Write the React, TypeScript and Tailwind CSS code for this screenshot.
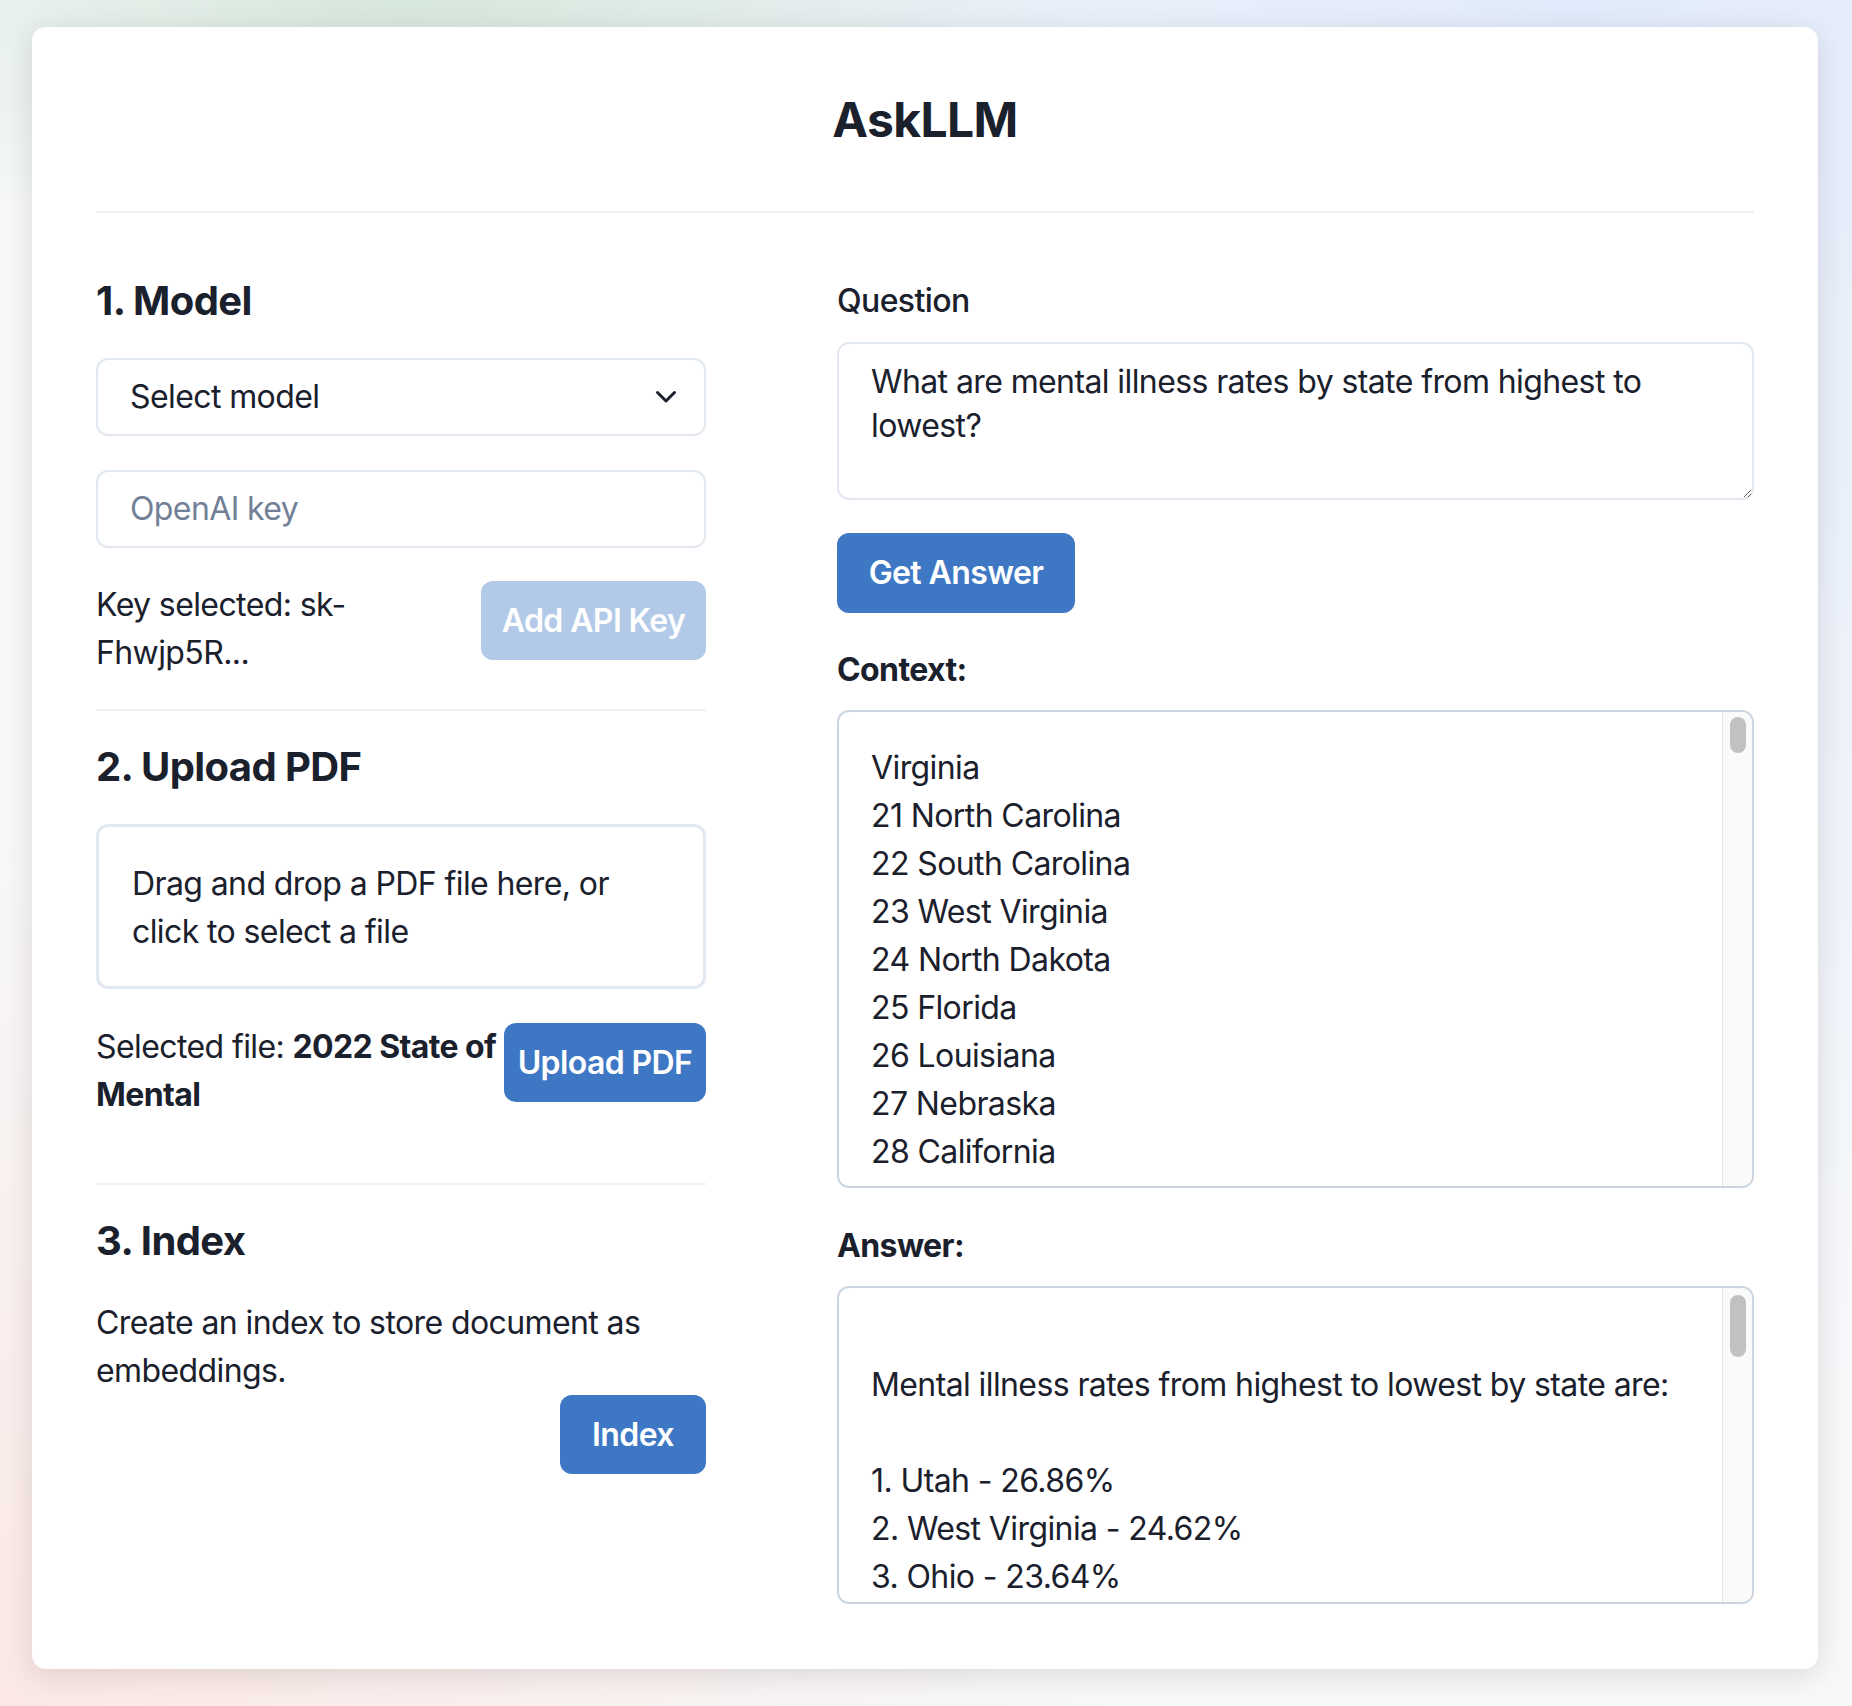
import React from "react";

const contextLines = [
  "Virginia",
  "21 North Carolina",
  "22 South Carolina",
  "23 West Virginia",
  "24 North Dakota",
  "25 Florida",
  "26 Louisiana",
  "27 Nebraska",
  "28 California",
];

const answerLines = [
  "Mental illness rates from highest to lowest by state are:",
  "",
  "1. Utah - 26.86%",
  "2. West Virginia - 24.62%",
  "3. Ohio - 23.64%",
];

function Scrollbar({ top, height }: { top: string; height: string }) {
  return (
    <div className={`w-[30px] shrink-0 border-l border-[#e6e6e6] bg-[#fafafa] flex justify-center ${top}`}>
      <div className={`w-[16px] ${height} rounded-full bg-[#c1c1c1]`} />
    </div>
  );
}

export default function App() {
  return (
    <div className="min-h-screen w-full pt-[27px] pb-[37px] pl-[32px] pr-[34px] bg-[#f7f8fa] [background-image:radial-gradient(700px_260px_at_22%_0%,#d6e7dc,transparent),radial-gradient(1100px_900px_at_0%_100%,#fbe8e4,transparent),radial-gradient(1400px_1400px_at_85%_0%,#e2ebfb,transparent)] font-[Inter,'Noto_Sans',sans-serif] text-[#1a202c] tracking-[-0.6px]">
      <div className="rounded-[14px] bg-white shadow-[0_6px_28px_rgba(60,40,40,0.14)] px-[64px] pt-[64px] pb-[65px]">
        <h1 className="text-center text-[48px] leading-[58px] font-bold tracking-[-0.6px]">AskLLM</h1>
        <div className="mt-[62px] h-[2px] bg-[#edf1f5]" />

        <div className="mt-[64px] grid grid-cols-[610px_1fr] gap-x-[131px]">
          {/* Left column */}
          <div className="flex flex-col">
            <h2 className="text-[40px] leading-[48px] font-bold tracking-[-0.6px]">1. Model</h2>
            <div className="mt-[33px] h-[78px] rounded-[12px] border-2 border-[#e2e8f0] pl-[32px] pr-[27px] flex items-center justify-between text-[32px]">
              <span>Select model</span>
              <svg width="22" height="14" viewBox="0 0 22 14" fill="none">
                <polyline points="2.5,2.5 11,11 19.5,2.5" stroke="#1a202c" strokeWidth="3" strokeLinecap="round" strokeLinejoin="round" />
              </svg>
            </div>
            <div className="mt-[34px] h-[78px] rounded-[12px] border-2 border-[#e2e8f0] pl-[32px] flex items-center text-[32px] text-[#718096]">
              OpenAI key
            </div>
            <div className="mt-[33px] flex items-start justify-between gap-[16px]">
              <p className="text-[32px] leading-[48px]">
                Key selected: sk-
                <br />
                Fhwjp5R...
              </p>
              <button className="w-[225px] h-[79px] shrink-0 rounded-[12px] bg-[#b2c9e7] text-white font-semibold text-[32px]">
                Add API Key
              </button>
            </div>

            <div className="mt-[32px] h-[2px] bg-[#edf1f5]" />

            <h2 className="mt-[32px] text-[40px] leading-[48px] font-bold tracking-[-0.6px]">2. Upload PDF</h2>
            <div className="mt-[33px] rounded-[12px] border-[3px] border-[#e2e8f0] pl-[33px] pr-[20px] pt-[33px] pb-[30px] text-[32px] leading-[48px]">
              Drag and drop a PDF file here, or
              <br />
              click to select a file
            </div>
            <div className="mt-[34px] flex items-start">
              <p className="flex-1 min-w-0 text-[32px] leading-[48px] whitespace-nowrap">
                Selected file: <b className="font-bold">2022 State of</b>
                <br />
                <b className="font-bold">Mental</b>
              </p>
              <button className="w-[202px] h-[79px] shrink-0 rounded-[12px] bg-[#3e78c4] text-white font-semibold text-[32px] whitespace-nowrap">
                Upload PDF
              </button>
            </div>

            <div className="mt-[64px] h-[2px] bg-[#edf1f5]" />

            <h2 className="mt-[32px] text-[40px] leading-[48px] font-bold tracking-[-0.6px]">3. Index</h2>
            <p className="mt-[34px] text-[32px] leading-[48px]">
              Create an index to store document as embeddings.
            </p>
            <div className="flex justify-end">
              <button className="w-[146px] h-[79px] rounded-[12px] bg-[#3e78c4] text-white font-semibold text-[32px]">
                Index
              </button>
            </div>
          </div>

          {/* Right column */}
          <div className="flex flex-col">
            <label className="text-[32px] leading-[48px] font-medium">Question</label>
            <textarea
              className="mt-[17px] h-[158px] rounded-[12px] border-2 border-[#e2e8f0] px-[32px] py-[16px] text-[32px] leading-[44px] tracking-[-0.6px] resize-y outline-none"
              defaultValue="What are mental illness rates by state from highest to lowest?"
            />
            <button className="mt-[33px] self-start w-[238px] h-[80px] rounded-[12px] bg-[#3e78c4] text-white font-semibold text-[32px]">
              Get Answer
            </button>

            <div className="mt-[33px] text-[32px] leading-[48px] font-bold">Context:</div>
            <div className="mt-[16px] h-[478px] rounded-[12px] border-2 border-[#cbd5e0] flex overflow-hidden">
              <div className="flex-1 overflow-hidden pl-[32px] pt-[32px] text-[32px] leading-[48px]">
                {contextLines.map((l, i) => (
                  <div key={i} className="whitespace-nowrap">{l}</div>
                ))}
              </div>
              <Scrollbar top="pt-[5px]" height="h-[36px]" />
            </div>

            <div className="mt-[34px] text-[32px] leading-[48px] font-bold">Answer:</div>
            <div className="mt-[16px] h-[318px] rounded-[12px] border-2 border-[#cbd5e0] flex overflow-hidden">
              <div className="flex-1 overflow-hidden pl-[32px] pt-[73px] text-[32px] leading-[48px]">
                {answerLines.map((l, i) => (
                  <div key={i} className="whitespace-nowrap h-[48px]">{l}</div>
                ))}
              </div>
              <Scrollbar top="pt-[7px]" height="h-[62px]" />
            </div>
          </div>
        </div>
      </div>
    </div>
  );
}
